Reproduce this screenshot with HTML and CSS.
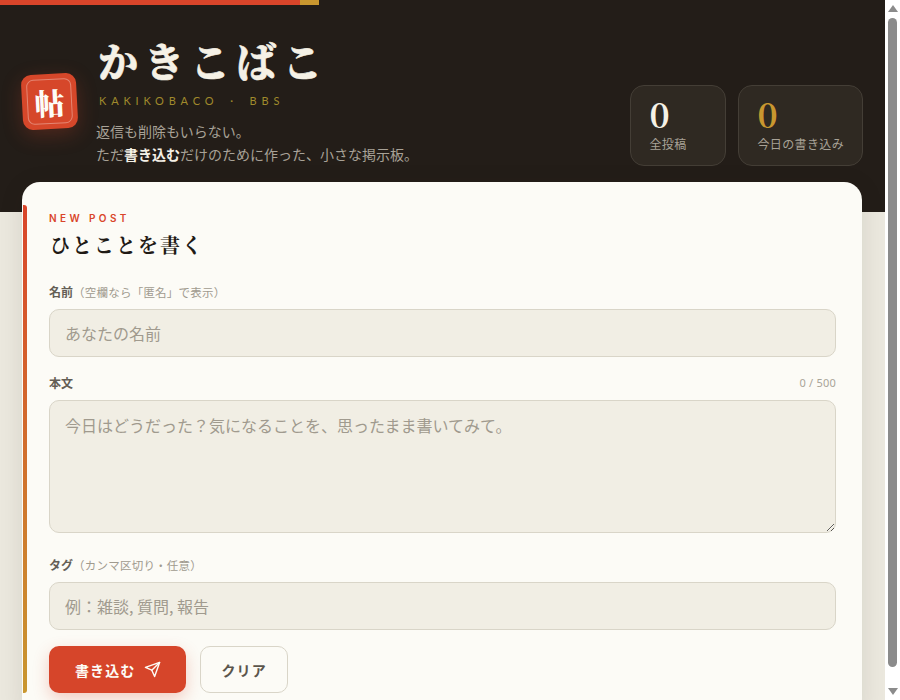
FILE: index.html
```html
<!DOCTYPE html>
<html lang="ja">
<head>
  <meta charset="UTF-8">
  <meta name="viewport" content="width=device-width, initial-scale=1.0">
  <title>かきこばこ</title>
  <link rel="stylesheet" href="styles.css">
</head>
<body>
  <header class="site-header">
    <div class="top-stripe"><span class="stripe-red"></span><span class="stripe-gold"></span></div>
    <div class="header-inner">
      <div class="brand">
        <div class="logo"><span>帖</span></div>
        <div class="brand-text">
          <h1>かきこばこ</h1>
          <p class="brand-sub">KAKIKOBACO ・ BBS</p>
          <p class="brand-desc">返信も削除もいらない。<br>ただ<strong>書き込む</strong>だけのために作った、小さな掲示板。</p>
        </div>
      </div>
      <div class="stats">
        <div class="stat">
          <div class="stat-num">0</div>
          <div class="stat-label">全投稿</div>
        </div>
        <div class="stat">
          <div class="stat-num gold">0</div>
          <div class="stat-label">今日の書き込み</div>
        </div>
      </div>
    </div>
  </header>

  <main class="container">
    <section class="card">
      <div class="eyebrow">NEW POST</div>
      <h2>ひとことを書く</h2>

      <div class="form-group">
        <div class="label-row">
          <label for="name">名前<small>（空欄なら「匿名」で表示）</small></label>
        </div>
        <input type="text" id="name" placeholder="あなたの名前" autocomplete="off">
      </div>

      <div class="form-group form-group-body">
        <div class="label-row">
          <label for="body">本文</label>
          <span class="counter">0 / 500</span>
        </div>
        <textarea id="body" placeholder="今日はどうだった？気になることを、思ったまま書いてみて。"></textarea>
      </div>

      <div class="form-group">
        <div class="label-row">
          <label for="tags">タグ<small>（カンマ区切り・任意）</small></label>
        </div>
        <input type="text" id="tags" placeholder="例：雑談, 質問, 報告" autocomplete="off">
      </div>

      <div class="actions">
        <button class="btn btn-primary">書き込む
          <svg width="17" height="17" viewBox="0 0 24 24" fill="none" stroke="currentColor" stroke-width="2" stroke-linecap="round" stroke-linejoin="round"><path d="M22 2 11 13"/><path d="M22 2 15 22l-4-9-9-4z"/></svg>
        </button>
        <button class="btn btn-secondary">クリア</button>
      </div>
    </section>
  </main>

  <div class="scrollbar">
    <span class="scroll-arrow scroll-up"></span>
    <span class="scroll-thumb"></span>
    <span class="scroll-arrow scroll-down"></span>
  </div>
</body>
</html>
```

FILE: styles.css
```css
* {
  box-sizing: border-box;
}
body {
  margin: 0;
  padding-right: 15px;
  background-color: #ebe8de;
  color: #1f1a15;
  font-family: "Noto Sans CJK JP", "Noto Sans", sans-serif;
}
/* scrollbar is hidden in the headless window, so it is drawn by hand */
.scrollbar {
  position: fixed;
  top: 0;
  right: 0;
  bottom: 0;
  width: 15px;
  padding: 5px 3px;
  background-color: #fff;
  display: flex;
  flex-direction: column;
  align-items: center;
}
.scroll-arrow {
  flex: none;
  width: 0;
  height: 0;
  border-left: 5px solid transparent;
  border-right: 5px solid transparent;
}
.scroll-up {
  border-bottom: 7px solid #8b8b8b;
}
.scroll-down {
  margin-top: 21px;
  border-top: 7px solid #8b8b8b;
}
.scroll-thumb {
  flex: none;
  width: 9px;
  height: 649px;
  margin-top: 6px;
  background-color: #8b8b8b;
  border-radius: 5px;
}
.site-header {
  background-color: #231d18;
  height: 212px;
}
.top-stripe {
  display: flex;
  height: 5px;
}
.stripe-red {
  width: 300px;
  background-color: #d9452a;
}
.stripe-gold {
  width: 19px;
  background-color: #c9972f;
}
.header-inner {
  width: 841px;
  margin-left: 22px;
  display: flex;
  justify-content: space-between;
  align-items: flex-start;
}
.brand {
  display: flex;
  align-items: flex-start;
  gap: 19px;
}
.logo {
  width: 55px;
  height: 55px;
  margin-top: 69px;
  background-color: #d6472a;
  border-radius: 10px;
  transform: rotate(-3deg);
  box-shadow: 0 6px 20px rgba(217, 72, 43, 0.25);
  display: flex;
  align-items: center;
  justify-content: center;
  position: relative;
  color: #fdfcf7;
  font-family: "Noto Serif CJK JP", "Noto Sans CJK JP", serif;
  font-size: 30px;
  font-weight: 900;
}
.logo::after {
  content: "";
  position: absolute;
  inset: 5px;
  border: 1px solid rgba(255, 255, 255, 0.35);
  border-radius: 7px;
}
.brand-text {
  padding-top: 28px;
}
h1 {
  margin: 0 0 0 2px;
  font-family: "Noto Serif CJK JP", "Noto Sans CJK JP", serif;
  font-size: 40px;
  line-height: 54px;
  font-weight: 900;
  letter-spacing: 0.155em;
  color: #f5f1e6;
  -webkit-text-stroke: 0.6px #f5f1e6;
}
.brand-sub {
  margin: 6px 0 0 3px;
  font-family: Lato, sans-serif;
  font-size: 11px;
  line-height: 16px;
  letter-spacing: 0.44em;
  color: #a08a2c;
}
.brand-desc {
  margin: 11px 0 0;
  font-size: 14px;
  line-height: 23px;
  color: #a8a297;
}
.brand-desc strong {
  color: #f5f1e6;
}
.stats {
  display: flex;
  gap: 12px;
  margin-top: 80px;
}
.stat {
  min-width: 96px;
  height: 81px;
  padding: 9px 18px;
  background-color: #2f2922;
  border: 1px solid #443e36;
  border-radius: 14px;
}
.stat-num {
  font-family: "Noto Serif CJK JP", "Liberation Serif", serif;
  font-size: 34px;
  line-height: 38px;
  font-weight: 700;
  color: #f5f1e6;
}
.stat-num.gold {
  color: #c9972f;
}
.stat-label {
  margin-top: 3px;
  font-size: 12px;
  line-height: 16px;
  letter-spacing: 0.03em;
  color: #a8a297;
}
.container {
  width: 840px;
  margin: -30px 0 0 22px;
  position: relative;
}
.card {
  position: relative;
  background-color: #fcfbf6;
  border-radius: 18px;
  padding: 29px 26px 24px 27px;
  box-shadow: 0 4px 24px rgba(35, 29, 24, 0.1);
}
.card::before {
  content: "";
  position: absolute;
  left: 1px;
  top: 23px;
  bottom: 24px;
  width: 4px;
  border-radius: 0 3px 3px 0;
  background: linear-gradient(to bottom, #d9452a, #c9972f);
}
.eyebrow {
  font-family: Inter, sans-serif;
  font-size: 10px;
  font-weight: 600;
  line-height: 14px;
  letter-spacing: 0.34em;
  color: #d9452a;
}
h2 {
  margin: 5px 0 0 1px;
  font-family: "Noto Serif CJK JP", "Noto Sans CJK JP", serif;
  font-size: 20px;
  line-height: 30px;
  font-weight: 700;
  letter-spacing: 0.1em;
}
.form-group {
  margin-top: 22px;
}
.form-group + .form-group {
  margin-top: 16px;
}
.form-group-body {
  margin-bottom: 22px;
}
.label-row {
  display: flex;
  justify-content: space-between;
  align-items: center;
  height: 18px;
  margin-bottom: 9px;
}
label {
  font-size: 12px;
  font-weight: 700;
  color: #645e55;
}
label small {
  font-size: 11.5px;
  font-weight: 400;
  letter-spacing: 0.02em;
  color: #a09a8e;
}
.counter {
  font-family: "Noto Sans", sans-serif;
  font-size: 11px;
  letter-spacing: 0.02em;
  color: #a9a498;
}
input[type="text"],
textarea {
  display: block;
  width: 100%;
  padding: 12px 15px;
  background-color: #f1eee4;
  border: 1px solid #d9d5c8;
  border-radius: 10px;
  font-family: inherit;
  font-size: 16px;
  color: #1f1a15;
  outline: none;
}
input[type="text"] {
  height: 48px;
}
textarea {
  height: 133px;
  resize: vertical;
}
::placeholder {
  color: #a09a8e;
}
.actions {
  display: flex;
  gap: 14px;
  margin-top: 16px;
}
.btn {
  height: 47px;
  border-radius: 10px;
  font-family: inherit;
  font-size: 14px;
  font-weight: 700;
  letter-spacing: 0.08em;
  cursor: pointer;
}
.btn-primary {
  display: flex;
  align-items: center;
  gap: 9px;
  padding: 0 25px 0 26px;
  background-color: #d6452a;
  border: none;
  color: #fdfcf7;
  box-shadow: 0 6px 16px rgba(217, 69, 42, 0.25);
}
.btn-secondary {
  padding: 0 20px;
  background-color: transparent;
  border: 1px solid #d9d5c8;
  color: #5b554c;
}
```
